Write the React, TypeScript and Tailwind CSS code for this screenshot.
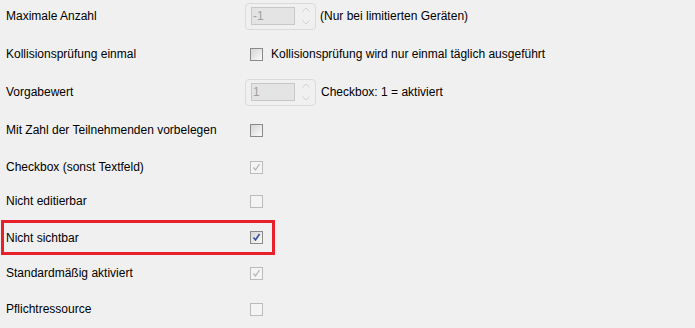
import React from 'react';

type Box = 'off' | 'on' | 'disOff' | 'disOn';

const Check: React.FC<{ kind: Box }> = ({ kind }) => {
  const disabled = kind === 'disOff' || kind === 'disOn';
  const checked = kind === 'on' || kind === 'disOn';
  return (
    <span
      className={`relative inline-block w-[13px] h-[13px] border ${
        disabled
          ? 'border-[#bcbcbc] bg-[#f4f4f4]'
          : 'border-[#8a8a8a] bg-gradient-to-br from-[#d6d6d6] to-[#fafafa]'
      }`}
    >
      {checked && (
        <svg viewBox="0 0 11 11" className="absolute left-0 top-0 w-[11px] h-[11px]">
          <path
            d="M2.5 5.5 L4.5 8 L8.5 2"
            fill="none"
            stroke={disabled ? '#b5b5b5' : '#3a4f98'}
            strokeWidth={disabled ? 1.3 : 1.6}
          />
        </svg>
      )}
    </span>
  );
};

const Spinner: React.FC<{ value: string }> = ({ value }) => (
  <div className="flex items-center w-[71px] h-[27px] rounded-[4px] border border-[#dadada] bg-[#f0f0f0] pl-[5px] shrink-0">
    <div className="w-[44px] h-[18px] border border-[#c8c8c8] bg-[#e4e4e4] text-[#a0a0a0] pl-[1px] leading-[16px]">
      {value}
    </div>
    <div className="flex flex-col items-center justify-between h-[18px] ml-[7px]">
      <svg viewBox="0 0 8 5" className="w-[8px] h-[5px]">
        <path d="M0.5 4.5 L4 1 L7.5 4.5" fill="none" stroke="#d0d0d0" strokeWidth="1" />
      </svg>
      <svg viewBox="0 0 8 5" className="w-[8px] h-[5px]">
        <path d="M0.5 0.5 L4 4 L7.5 0.5" fill="none" stroke="#d0d0d0" strokeWidth="1" />
      </svg>
    </div>
  </div>
);

export default function App() {
  return (
    <div
      className="w-[695px] h-[328px] bg-[#f0f0f0] text-[12px] text-[#000] overflow-hidden pt-[6px]"
      style={{ fontFamily: '"Liberation Sans", Arial, sans-serif' }}
    >
      {/* Maximale Anzahl */}
      <div className="flex items-center h-[20px] pl-[6px]">
        <div className="w-[239px]">Maximale Anzahl</div>
        <Spinner value="-1" />
        <span className="ml-[4px]">(Nur bei limitierten Geräten)</span>
      </div>

      <div className="flex items-center h-[20px] pl-[6px] mt-[18px]">
        <div className="w-[239px]">Kollisionsprüfung einmal</div>
        <span className="ml-[5px] flex items-center">
          <Check kind="off" />
        </span>
        <span className="ml-[8px]">Kollisionsprüfung wird nur einmal täglich ausgeführt</span>
      </div>

      <div className="flex items-center h-[20px] pl-[6px] mt-[18px]">
        <div className="w-[239px]">Vorgabewert</div>
        <Spinner value="1" />
        <span className="ml-[5px]">Checkbox: 1 = aktiviert</span>
      </div>

      <div className="flex items-center h-[20px] pl-[6px] mt-[18px]">
        <div className="w-[239px]">Mit Zahl der Teilnehmenden vorbelegen</div>
        <span className="ml-[5px] flex items-center">
          <Check kind="off" />
        </span>
      </div>

      <div className="flex items-center h-[20px] pl-[6px] mt-[17px]">
        <div className="w-[239px]">Checkbox (sonst Textfeld)</div>
        <span className="ml-[5px] flex items-center">
          <Check kind="disOn" />
        </span>
      </div>

      <div className="flex items-center h-[20px] pl-[6px] mt-[14px]">
        <div className="w-[239px]">Nicht editierbar</div>
        <span className="ml-[5px] flex items-center">
          <Check kind="disOff" />
        </span>
      </div>

      {/* highlighted row */}
      <div className="mt-[9px] ml-[1px] w-[274px] h-[35px] border-[3px] border-[#e8202a] flex items-center pl-[2px]">
        <div className="w-[239px]">Nicht sichtbar</div>
        <span className="ml-[5px] flex items-center">
          <Check kind="on" />
        </span>
      </div>

      <div className="flex items-center h-[20px] pl-[6px] mt-[8px]">
        <div className="w-[239px]">Standardmäßig aktiviert</div>
        <span className="ml-[5px] flex items-center">
          <Check kind="disOn" />
        </span>
      </div>

      <div className="flex items-center h-[20px] pl-[6px] mt-[16px]">
        <div className="w-[239px]">Pflichtressource</div>
        <span className="ml-[5px] flex items-center">
          <Check kind="disOff" />
        </span>
      </div>
    </div>
  );
}
